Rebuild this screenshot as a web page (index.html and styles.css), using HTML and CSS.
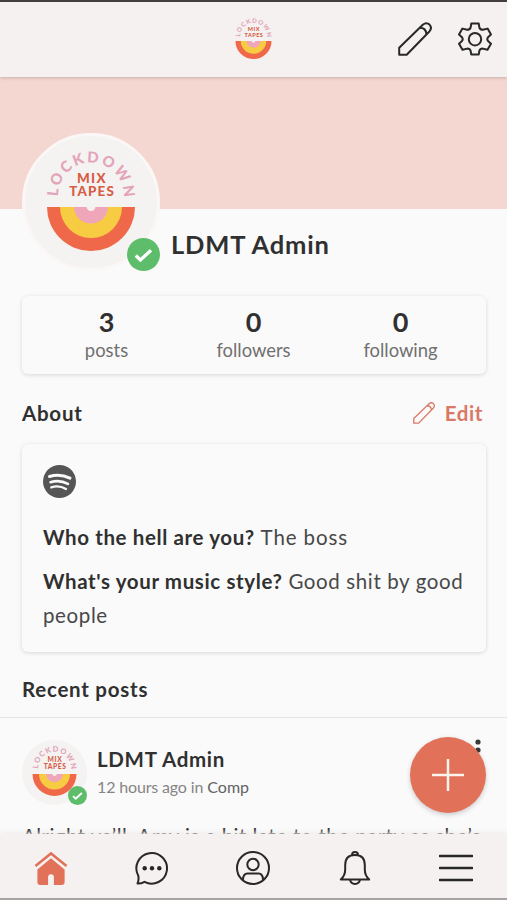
FILE: index.html
```html
<!DOCTYPE html>
<html lang="en">
<head>
<meta charset="utf-8">
<title>LDMT Admin</title>
<link rel="stylesheet" href="styles.css">
</head>
<body>
<svg class="defs" aria-hidden="true">
  <defs><path id="arc" d="M17 45.500 A33 34 0 0 1 83 45.500"/></defs>
  <symbol id="logo" viewBox="0 0 100 102">
    <text class="logo-arc"><textPath href="#arc" textLength="106" lengthAdjust="spacing">LOCKDOWN</textPath></text>
    <text class="logo-word" x="36" y="32.300" textLength="28.500">MIX</text>
    <text class="logo-word" x="28.300" y="45.200" textLength="44.500">TAPES</text>
    <path fill="#ee6849" d="M6 56H94A44 44 0 0 1 6 56Z"/>
    <path fill="#f8cc42" d="M19 56H81A31 31 0 0 1 19 56Z"/>
    <path fill="#efa6b9" d="M33 56H67A17 16.500 0 0 1 33 56Z"/>
    <path fill="#f5f1f1" d="M45.500 55.500H54.500A4.500 4.500 0 0 1 45.500 55.500Z"/>
  </symbol>
  <symbol id="pencil" viewBox="0 0 34 34">
    <path d="M1.200 32.800V25.700L24.800 2.700Q28.400 -.3 31.500 2.600 34.400 5.700 31.600 9.200L8.700 32.800ZM21.800 5.800Q28 5.800 28.500 12.300"/>
  </symbol>
  <symbol id="check" viewBox="0 0 32 32">
    <circle cx="16" cy="16" r="16" fill="#5dbd6b"/>
    <path d="M8.500 17L13 21.300 23.300 11.800" fill="none" stroke="#fff" stroke-width="3.200"/>
  </symbol>
</svg>
<div class="app">
  <header class="topbar">
    <svg class="brand"><use href="#logo"/></svg>
    <div class="actions">
      <svg class="line pencil-lg"><use href="#pencil"/></svg>
      <svg class="line gear" viewBox="0 0 34 34"><path d="M13.300 1.500H20.700L21.400 5.600Q22 7.600 24.800 7.800L29.600 6.600 33 12.600 30 15.300Q28.600 17.200 30 19L33 21.700 29.500 27.800 24.800 26.600Q22 26.800 21.400 28.800L20.700 32.500H13.300L12.600 28.800Q12 26.800 9.200 26.600L4.500 27.800 1 21.700 4 19Q5.400 17.200 4 15.300L1 12.600 4.400 6.600 9.200 7.800Q12 7.600 12.600 5.600Z"/><circle cx="17" cy="17.200" r="6.200"/></svg>
    </div>
  </header>
  <div class="cover"></div>
  <section class="profile">
    <div class="avatar"><svg class="avatar-logo"><use href="#logo"/></svg><svg class="badge"><use href="#check"/></svg></div>
    <h1>LDMT Admin</h1>
  </section>
  <section class="card stats">
    <div><b>3</b><span>posts</span></div>
    <div><b>0</b><span>followers</span></div>
    <div><b>0</b><span>following</span></div>
  </section>
  <div class="heading"><h2 class="about-title">About</h2><a class="edit"><svg><use href="#pencil"/></svg><span>Edit</span></a></div>
  <section class="card about">
    <svg class="spotify" viewBox="0 0 33 33"><circle cx="16.500" cy="16.500" r="16.500" fill="#555"/><g fill="none" stroke="#fafafa" stroke-linecap="round"><path stroke-width="3" d="M6.500 11.500Q17 8.300 27 13.200"/><path stroke-width="2.600" d="M7.500 17.200Q16.500 14.300 25 18.900"/><path stroke-width="2.300" d="M8.300 22.300Q16 19.900 23 24"/></g></svg>
    <p><b>Who the hell are you?</b> <span class="boss">The boss</span></p>
    <p><b>What's your music style?</b> <span>Good shit by good<br>people</span></p>
  </section>
  <h2 class="recent">Recent posts</h2>
  <article class="post">
    <div class="post-head">
      <div class="avatar-sm"><svg class="avatar-logo"><use href="#logo"/></svg><svg class="badge"><use href="#check"/></svg></div>
      <div class="byline"><h3>LDMT Admin</h3><p><span class="ago">12 hours ago in</span> <em>Comp</em></p></div>
      <svg class="more" viewBox="0 0 6 22"><circle cx="3" cy="3" r="2.600"/><circle cx="3" cy="11" r="2.600"/><circle cx="3" cy="19" r="2.600"/></svg>
    </div>
    <p class="excerpt">Alright ya’ll, Amy is a bit late to the party as she’s</p>
  </article>
  <button class="fab" aria-label="New post"><svg viewBox="0 0 34 34"><path d="M17 1V33M1 17H33"/></svg></button>
  <nav class="tabs">
    <svg class="home" viewBox="0 0 34 35"><path fill="none" stroke="#e17158" stroke-width="2.600" d="M1 15.500L17 2.500 33 15.500"/><path fill="#e17158" d="M17 7.500L31 19V32Q31 35 28 35H20V27Q20 24 17 24T14 27V35H6Q3 35 3 32V19Z"/></svg>
    <svg class="line" viewBox="0 0 34 34"><path d="M2.500 32.500Q4.200 28.500 3.200 24.500A15.300 15.300 0 1 1 9.500 30.800Q6 32.700 2.500 32.500Z"/><g class="dots"><circle cx="9.700" cy="17.300" r="2.200"/><circle cx="17" cy="17.300" r="2.200"/><circle cx="24.300" cy="17.300" r="2.200"/></g></svg>
    <svg class="line" viewBox="0 0 34 34"><circle cx="17" cy="17" r="16"/><circle cx="17" cy="13.500" r="5.700"/><path d="M7 29Q7 22.500 11.500 22.500H22.500Q27 22.500 27 29"/></svg>
    <svg class="line" viewBox="0 0 34 34"><path d="M2.800 28.500Q7.200 24.500 7.200 18.500V14C7.200 7.500 11 4 17 4S26.800 7.500 26.800 14V18.500Q26.800 24.500 31.200 28.500ZM14 4.200Q14 1 17 1T20 4.200M12 28.700Q12.700 33 17 33T22 28.700"/></svg>
    <svg class="line menu" viewBox="0 0 34 34"><path d="M1 5H33M1 17H33M1 29H33"/></svg>
  </nav>
</div>
</body>
</html>
```

FILE: styles.css
```css
* { box-sizing: border-box; margin: 0; padding: 0; }
body { background: #fafafa; color: #303030; font-family: Lato, "Liberation Sans", sans-serif; }
.defs { position: absolute; width: 0; height: 0; }
.logo-arc { font-size: 15px; font-weight: 900; fill: #e3a4b9; }
.logo-word { font-size: 13.4px; font-weight: 900; fill: #d65d46; }
.app { position: relative; height: 900px; overflow: hidden; }
svg { display: block; flex: none; }
.line { fill: none; stroke: #282828; stroke-width: 2; stroke-linejoin: round; stroke-linecap: round; }

.topbar { position: relative; height: 77px; border-top: 2px solid #433e3f; background: #f5f1f0; display: grid; grid-template-columns: 1fr 41px 1fr; box-shadow: 0 1px 3px #957d7870; z-index: 1; }
.brand { grid-column: 2; width: 41px; height: 42px; margin-top: 16px; }
.actions { display: flex; justify-content: flex-end; gap: 25px; padding: 20px 15px 0 0; }
.pencil-lg, .gear { width: 34px; height: 34px; }
.pencil-lg { margin-right: 1px; }
.cover { height: 132px; background: #f5d7d1; }

.profile { height: 87px; padding-left: 22px; display: flex; gap: 11px; }
.avatar { position: relative; width: 138px; height: 138px; flex: none; margin-top: -76px; padding: 15px 16px; border: 3px solid #fbf7f6; border-radius: 50%; background: #f5f2f2; }
.avatar .avatar-logo { width: 100px; height: 102px; }
.avatar .badge { position: absolute; width: 33px; height: 33px; right: -3px; bottom: -3px; }
h1 { font-size: 25.500px; line-height: 32px; margin-top: 19px; letter-spacing: .8px; }

.card { margin: 0 21px 0 22px; border-radius: 6px; background: #fafafa; box-shadow: 0 1px 4px #00000024; }
.stats { height: 78px; padding: 9px 12px 0 11px; display: grid; grid-template-columns: repeat(3, 1fr); text-align: center; }
.stats b { display: block; font-size: 27px; line-height: 33px; }
.stats span { display: block; font-size: 18.400px; line-height: 24px; color: #707070; }
.heading { height: 70px; padding: 24px 24px 0 22px; display: flex; justify-content: space-between; align-items: flex-start; }
h2 { font-size: 20.500px; line-height: 30px; letter-spacing: .75px; }
.edit { display: flex; align-items: center; gap: 10px; font-size: 20.500px; line-height: 30px; font-weight: 700; letter-spacing: .6px; color: #d97965; }
.edit svg { width: 22px; height: 22px; fill: none; stroke: #d97965; stroke-width: 2; }
.about { height: 208px; padding: 21px 21px 0; font-size: 20.500px; line-height: 34px; letter-spacing: .62px; }
.spotify { width: 33px; height: 33px; margin-bottom: 22px; }
.about p { white-space: nowrap; margin-bottom: 10px; }
.about span { color: #484848; }
.about .boss { letter-spacing: .9px; }
.recent { height: 65px; padding: 22px 22px 0; }

.post { border-top: 1px solid #e7e4e4; padding: 22px 22px 0; }
.post-head { display: flex; }
.avatar-sm { position: relative; width: 65px; height: 65px; padding: 6px 7px; border-radius: 50%; background: #f5f2f2; }
.avatar-sm .avatar-logo { width: 51px; height: 51px; }
.avatar-sm .badge { position: absolute; width: 19px; height: 19px; right: 0; bottom: 0; }
.byline { margin-left: 10px; flex: 1; }
.byline h3 { font-size: 20.500px; line-height: 28px; margin-top: 5px; letter-spacing: .68px; }
.byline p { font-size: 16px; line-height: 28px; color: #858585; }
.ago { letter-spacing: -.15px; }
.byline em { font-style: normal; color: #626262; }
.more { width: 6px; height: 22px; margin: -1px 4px 0 0; fill: #3a3a3a; }
.excerpt { font-size: 20.500px; line-height: 30px; margin-top: 16px; white-space: nowrap; letter-spacing: .45px; }

.fab { position: absolute; left: 410px; top: 737px; width: 76px; height: 76px; border: 0; border-radius: 50%; background: #e17158; box-shadow: 0 2px 5px #00000030; display: grid; place-items: center; }
.fab svg { width: 34px; height: 34px; stroke: #fff3ed; stroke-width: 2.500; }
.tabs { position: absolute; left: 0; right: 0; bottom: 0; height: 66px; padding: 17px 0 0; display: grid; grid-template-columns: repeat(5, 1fr); justify-items: center; align-items: start; background: #f5f1f0; border-bottom: 2px solid #a7a3a2; box-shadow: 0 -1px 5px #eee8e8; }
.tabs svg { width: 34px; height: 34px; }
.tabs .menu { stroke-width: 2.600; }
.tabs .dots { fill: #282828; stroke: none; }
```
